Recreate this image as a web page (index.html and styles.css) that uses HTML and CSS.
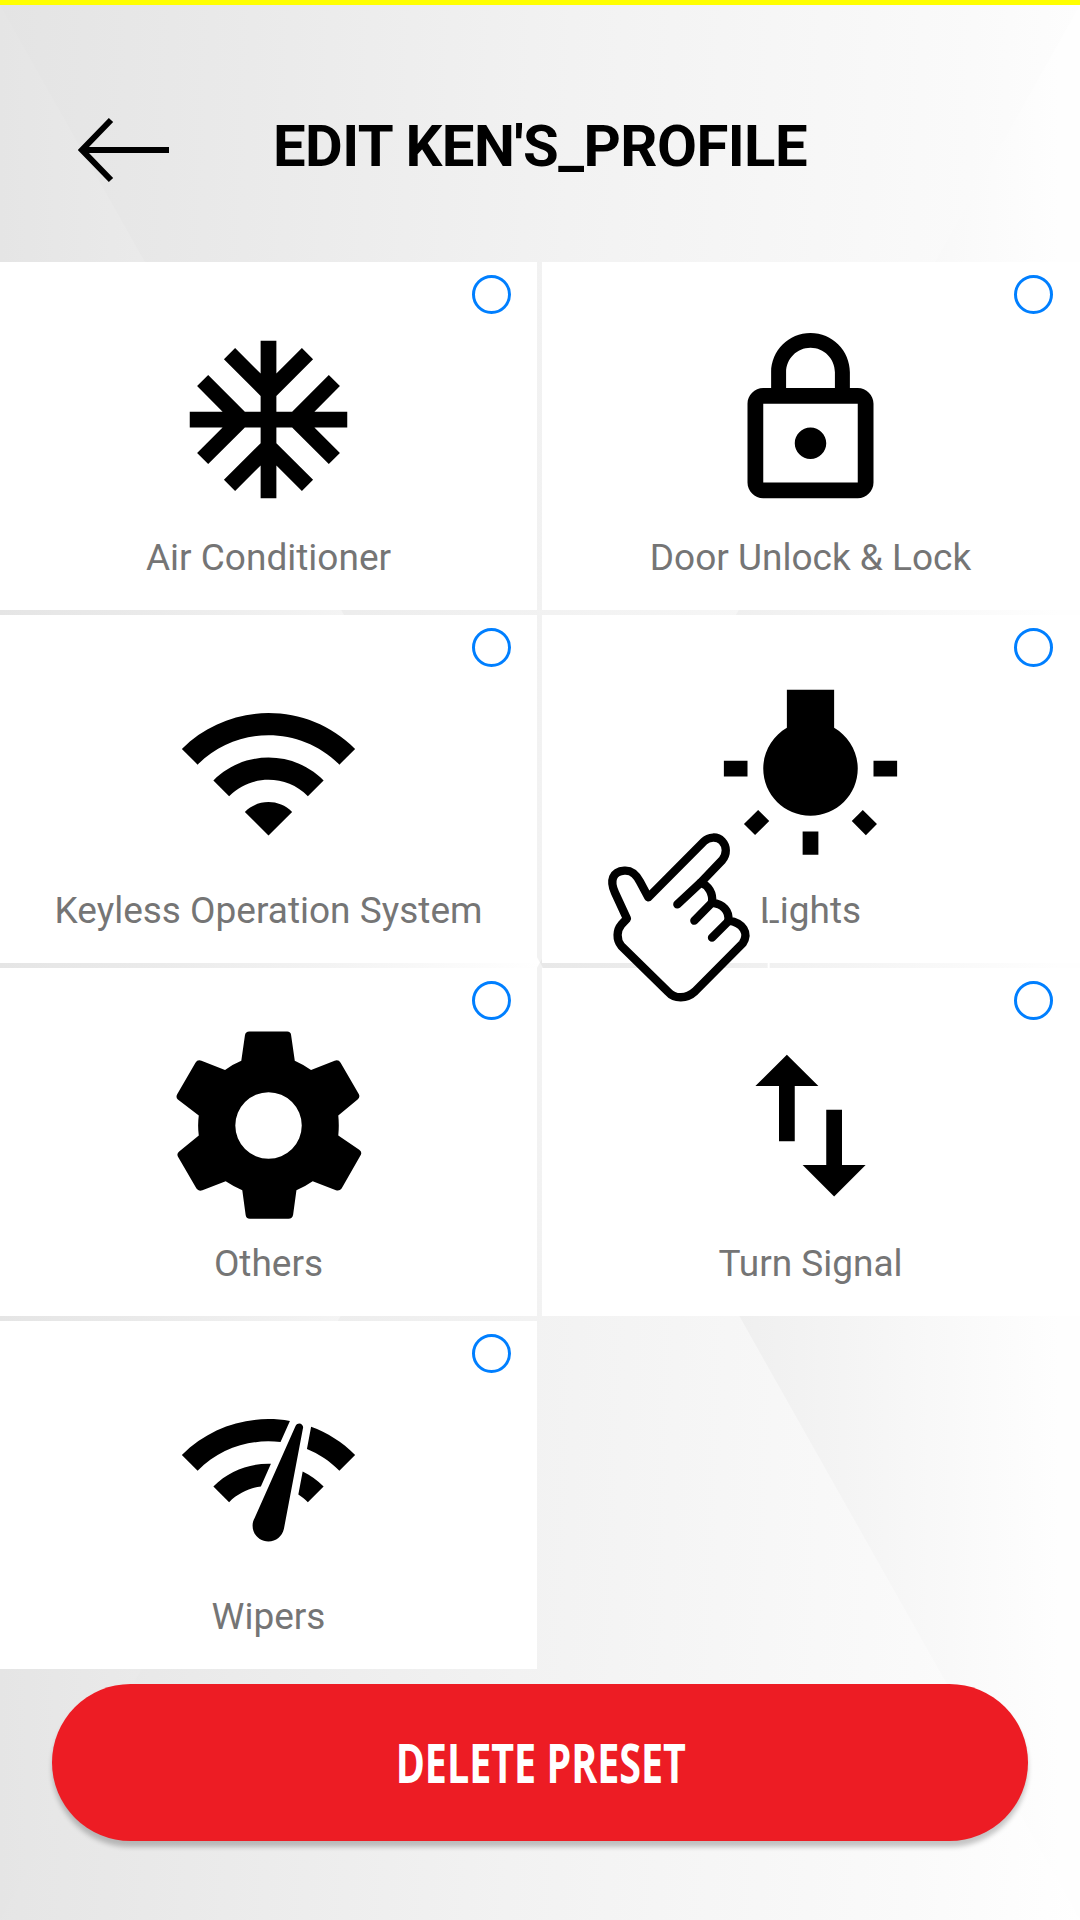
FILE: index.html
```html
<!DOCTYPE html>
<html lang="en">
<head>
    <meta charset="UTF-8">
    <title>Edit Profile</title>
    <link rel="stylesheet" href="styles.css">
</head>
<body>
<div id="contain">
    <div class="header">
        <svg class="back" viewBox="0 0 92 68">
            <path d="M91 34H4M33 4L4 34l29 30"/>
        </svg>
        <h1>EDIT KEN'S_PROFILE</h1>
    </div>
    <ul class="list">
        <li>
            <span class="check"></span>
            <svg class="icon" viewBox="0 0 24 24"><path d="M22 11h-4.17l3.24-3.24-1.41-1.42L15 11h-2V9l4.66-4.66-1.42-1.41L13 6.17V2h-2v4.17L7.76 2.93 6.34 4.34 11 9v2H9L4.34 6.34 2.93 7.76 6.17 11H2v2h4.17l-3.24 3.24 1.41 1.42L9 13h2v2l-4.66 4.66 1.42 1.41L11 17.83V22h2v-4.17l3.24 3.24 1.42-1.41L13 15v-2h2l4.66 4.66 1.41-1.42L17.83 13H22z"/></svg>
            <p>Air Conditioner</p>
        </li>
        <li>
            <span class="check"></span>
            <svg class="icon" viewBox="0 0 24 24"><path d="M12 17c1.1 0 2-.9 2-2s-.9-2-2-2-2 .9-2 2 .9 2 2 2zm6-9h-1V6c0-2.76-2.24-5-5-5S7 3.24 7 6v2H6c-1.1 0-2 .9-2 2v10c0 1.1.9 2 2 2h12c1.1 0 2-.9 2-2V10c0-1.1-.9-2-2-2zM8.9 6c0-1.71 1.39-3.1 3.1-3.1s3.1 1.39 3.1 3.1v2H8.9V6zM18 20H6V10h12v10z"/></svg>
            <p>Door Unlock &amp; Lock</p>
        </li>
        <li>
            <span class="check"></span>
            <svg class="icon" viewBox="0 0 24 24"><path d="M1 9l2 2c4.97-4.97 13.03-4.97 18 0l2-2C16.93 2.93 7.08 2.93 1 9zm8 8l3 3 3-3c-1.65-1.66-4.34-1.66-6 0zm-4-4l2 2c2.76-2.76 7.24-2.76 10 0l2-2C15.14 9.14 8.87 9.14 5 13z"/></svg>
            <p>Keyless Operation System</p>
        </li>
        <li>
            <span class="check"></span>
            <svg class="icon" viewBox="0 0 24 24"><path d="M3.55 18.54l1.41 1.41 1.8-1.79-1.41-1.41-1.8 1.79zM11 22.45h2V19.5h-2v2.95zM4 10.5H1v2h3v-2zm11-4.19V1.5H9v4.81C7.21 7.35 6 9.28 6 11.5c0 3.31 2.69 6 6 6s6-2.69 6-6c0-2.22-1.21-4.15-3-5.19zm5 4.19v2h3v-2h-3zm-2.76 7.66l1.79 1.8 1.41-1.41-1.8-1.79-1.4 1.4z"/></svg>
            <p>Lights</p>
            <!-- tap pointer, lies over the tiles -->
            <svg class="hand" viewBox="75 540 495 528">
                <path class="edge" d="M566 540V1068"/>
                <path class="palm" d="M205 742L372 574C386 560 412 558 426 573C441 589 441 612 427 630L362 698C385 706 400 730 396 758C430 763 448 782 445 812C490 818 508 850 488 880L345 1024C320 1047 284 1048 264 1025L124 888C108 868 110 840 124 824L141 806L105 728C88 692 98 664 133 662C160 660 172 680 180 695Z"/>
                <path d="M362 698L292 763M396 758L343 812M447 812L396 863"/>
            </svg>
        </li>
        <li>
            <span class="check"></span>
            <svg class="icon" viewBox="161.4 211.5 569 569"><path d="M388 213H502Q513 213 514 224L525 301Q550 312 574 329L645 301Q657 297 663 307L718 402Q722 411 715 417L656 466Q659 496 656 526L719 569Q728 575 724 584L666 686Q660 694 649 691L579 664Q556 680 530 691L520 765Q518 777 506 777H390Q378 777 377 765L367 691Q341 680 317 664L247 691Q235 695 229 686L173 589Q169 580 177 574L236 526Q232 496 236 466L173 418Q166 411 171 402L226 307Q232 297 244 301L315 329Q339 311 364 301L375 224Q377 213 388 213ZM446 396A100 100 0 1 0 446 596A100 100 0 1 0 446 396Z"/></svg>
            <p>Others</p>
        </li>
        <li>
            <span class="check"></span>
            <svg class="icon" viewBox="0 0 24 24"><path d="M9 3L5 6.99h3V14h2V6.99h3L9 3zm7 14.01V10h-2v7.01h-3L15 21l4-3.99h-3z"/></svg>
            <p>Turn Signal</p>
        </li>
        <li>
            <span class="check"></span>
            <svg class="icon" viewBox="0 0 24 24"><path d="M15.9 5c-.17 0-.32.09-.41.23l-.07.15-5.18 11.65c-.16.29-.26.61-.26.96 0 1.11.9 2.01 2.01 2.01.96 0 1.77-.68 1.96-1.59l.01-.03L16.4 5.5c0-.28-.22-.5-.5-.5zM1 9l2 2c2.88-2.88 6.79-4.08 10.53-3.62l1.19-2.68C9.89 3.84 4.74 5.27 1 9zm20 2l2-2c-1.64-1.64-3.55-2.82-5.59-3.57l-.53 2.82c1.5.62 2.9 1.53 4.12 2.75zm-4 4l2-2c-.8-.8-1.7-1.42-2.66-1.89l-.55 2.92c.42.27.83.59 1.21.97zM5 13l2 2c1.13-1.13 2.56-1.79 4.03-2l1.28-2.88c-2.63-.08-5.3.87-7.31 2.88z"/></svg>
            <p>Wipers</p>
        </li>
    </ul>
    <button class="delete"><span>DELETE PRESET</span></button>
</div>
</body>
</html>
```
FILE: styles.css
```css
*{
    margin: 0;
    padding: 0;
    box-sizing: border-box;
}
li{
    list-style: none;
}
body{
    font-family: Roboto, sans-serif;
}
#contain{
    position: relative;
    z-index: 0;
    width: 1080px;
    height: 1920px;
    border-top: 5px solid #ffff00;
    background: linear-gradient(92deg, #e4e4e4, #e8e8e8 15%, #f2f2f2 50%, #fafafa 85%, #fff);
    overflow: hidden;
}
/* left and right facets of the background */
#contain:before,
#contain:after{
    content: "";
    position: absolute;
    z-index: -1;
    top: 0;
    left: 0;
    width: 100%;
    height: 100%;
}
#contain:before{
    background: linear-gradient(90deg, #e5e5e5, #eaeaea 13%, #f4f4f4 32%, #fff 50%);
    clip-path: polygon(0 0, 50% 50%, 0 100%);
}
#contain:after{
    background: linear-gradient(90deg, #e8e8e8 50%, #efefef 68%, #f8f8f8 86%, #fefefe 98%);
    clip-path: polygon(100% 0, 50% 50%, 100% 100%);
}
.header{
    display: flex;
    height: 257px;
    padding: 111px 0 0 78px;
}
.back{
    width: 92px;
    height: 68px;
    fill: none;
    stroke: #000;
    stroke-width: 6;
}
h1{
    width: 536px;
    margin: -4px 0 0 103px;
    font-size: 58px;
    line-height: 68px;
    letter-spacing: -.55px;
    white-space: nowrap;
}
.list{
    display: grid;
    grid-template-columns: 537px 538px;
    grid-auto-rows: 348px;
    gap: 5px;
}
.list li{
    position: relative;
    padding-top: 63px;
    background: #fff;
    text-align: center;
}
.list li:nth-child(even){
    padding-right: 1px;
}
.icon{
    display: block;
    width: 189px;
    height: 189px;
    margin: 0 auto;
}
.list p{
    margin-top: 21px;
    font-size: 37px;
    line-height: 46px;
    color: #757575;
}
.check{
    position: absolute;
    top: 13px;
    left: 472px;
    width: 39px;
    height: 39px;
    border: 3px solid #007fff;
    border-radius: 50%;
}
.hand{
    position: absolute;
    z-index: 1;
    top: 215px;
    left: 63px;
    width: 165px;
    height: 176px;
    fill: none;
    stroke: #000;
    stroke-width: 25;
    stroke-linecap: round;
    stroke-linejoin: round;
}
.hand .palm{
    fill: #fff;
}
.hand .edge{
    stroke: #fff;
    stroke-width: 6;
}
.delete{
    display: block;
    width: 976px;
    height: 157px;
    margin: 15px 0 0 52px;
    padding: 0 0 2px 2px;
    border: none;
    border-radius: 79px;
    background: #ed1c24;
    box-shadow: 0 6px 5px rgba(0,0,0,.22);
    color: #fff;
    font: bold 54px "Open Sans", sans-serif;
}
.delete span{
    display: inline-block;
    transform: scaleX(.73);
}
```
